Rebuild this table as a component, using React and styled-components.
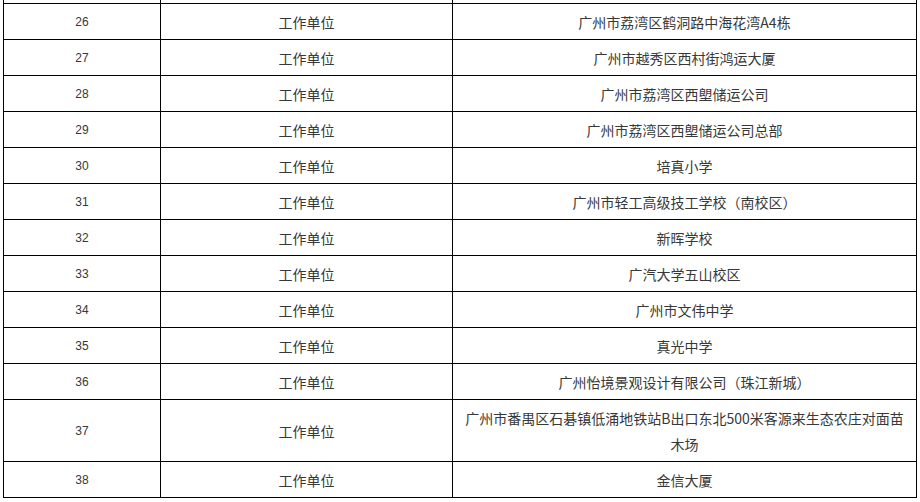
import React from 'react';
import styled, { createGlobalStyle } from 'styled-components';

const GlobalStyle = createGlobalStyle`
    html, body {
        margin: 0;
        padding: 0;
        background: #fff;
    }
    body {
        font-family: "Noto Sans CJK SC", "Liberation Sans", sans-serif;
        color: #333;
    }
`;

const Page = styled.div`
    padding-left: 3px;
    overflow: hidden;
`;

const Table = styled.table`
    border-collapse: collapse;
    table-layout: fixed;
    width: 913px;
`;

const Col = styled.col`
    width: ${p => p.$w}px;
`;

const TailRow = styled.tr`
    height: 3px;

    td {
        padding: 0;
        border: 1px solid #000;
        border-top: none;
        height: 2px;
        line-height: 0;
    }
`;

const Cell = styled.td`
    border: 1px solid #000;
    padding: 5px 6px 4px;
    text-align: center;
    vertical-align: middle;
    line-height: 26px;
    font-size: ${p => (p.$num ? 12 : 14)}px;
    font-family: ${p => (p.$num ? '"Liberation Sans", "DejaVu Sans", sans-serif' : '"Noto Sans CJK SC", sans-serif')};
    color: #383838;
`;

const rows = [
    [26, '广州市荔湾区鹤洞路中海花湾A4栋'],
    [27, '广州市越秀区西村街鸿运大厦'],
    [28, '广州市荔湾区西塱储运公司'],
    [29, '广州市荔湾区西塱储运公司总部'],
    [30, '培真小学'],
    [31, '广州市轻工高级技工学校（南校区）'],
    [32, '新晖学校'],
    [33, '广汽大学五山校区'],
    [34, '广州市文伟中学'],
    [35, '真光中学'],
    [36, '广州怡境景观设计有限公司（珠江新城）'],
    [37, '广州市番禺区石碁镇低涌地铁站B出口东北500米客源来生态农庄对面苗木场'],
    [38, '金信大厦']
];

const App = () => (
    <Page>
        <GlobalStyle />
        <Table>
            <colgroup>
                <Col $w={157} />
                <Col $w={292} />
                <Col $w={464} />
            </colgroup>
            <tbody>
                <TailRow>
                    <td />
                    <td />
                    <td />
                </TailRow>
                {rows.map(([no, place]) => (
                    <tr key={no}>
                        <Cell $num>{no}</Cell>
                        <Cell>工作单位</Cell>
                        <Cell>{place}</Cell>
                    </tr>
                ))}
            </tbody>
        </Table>
    </Page>
);

export default App;
